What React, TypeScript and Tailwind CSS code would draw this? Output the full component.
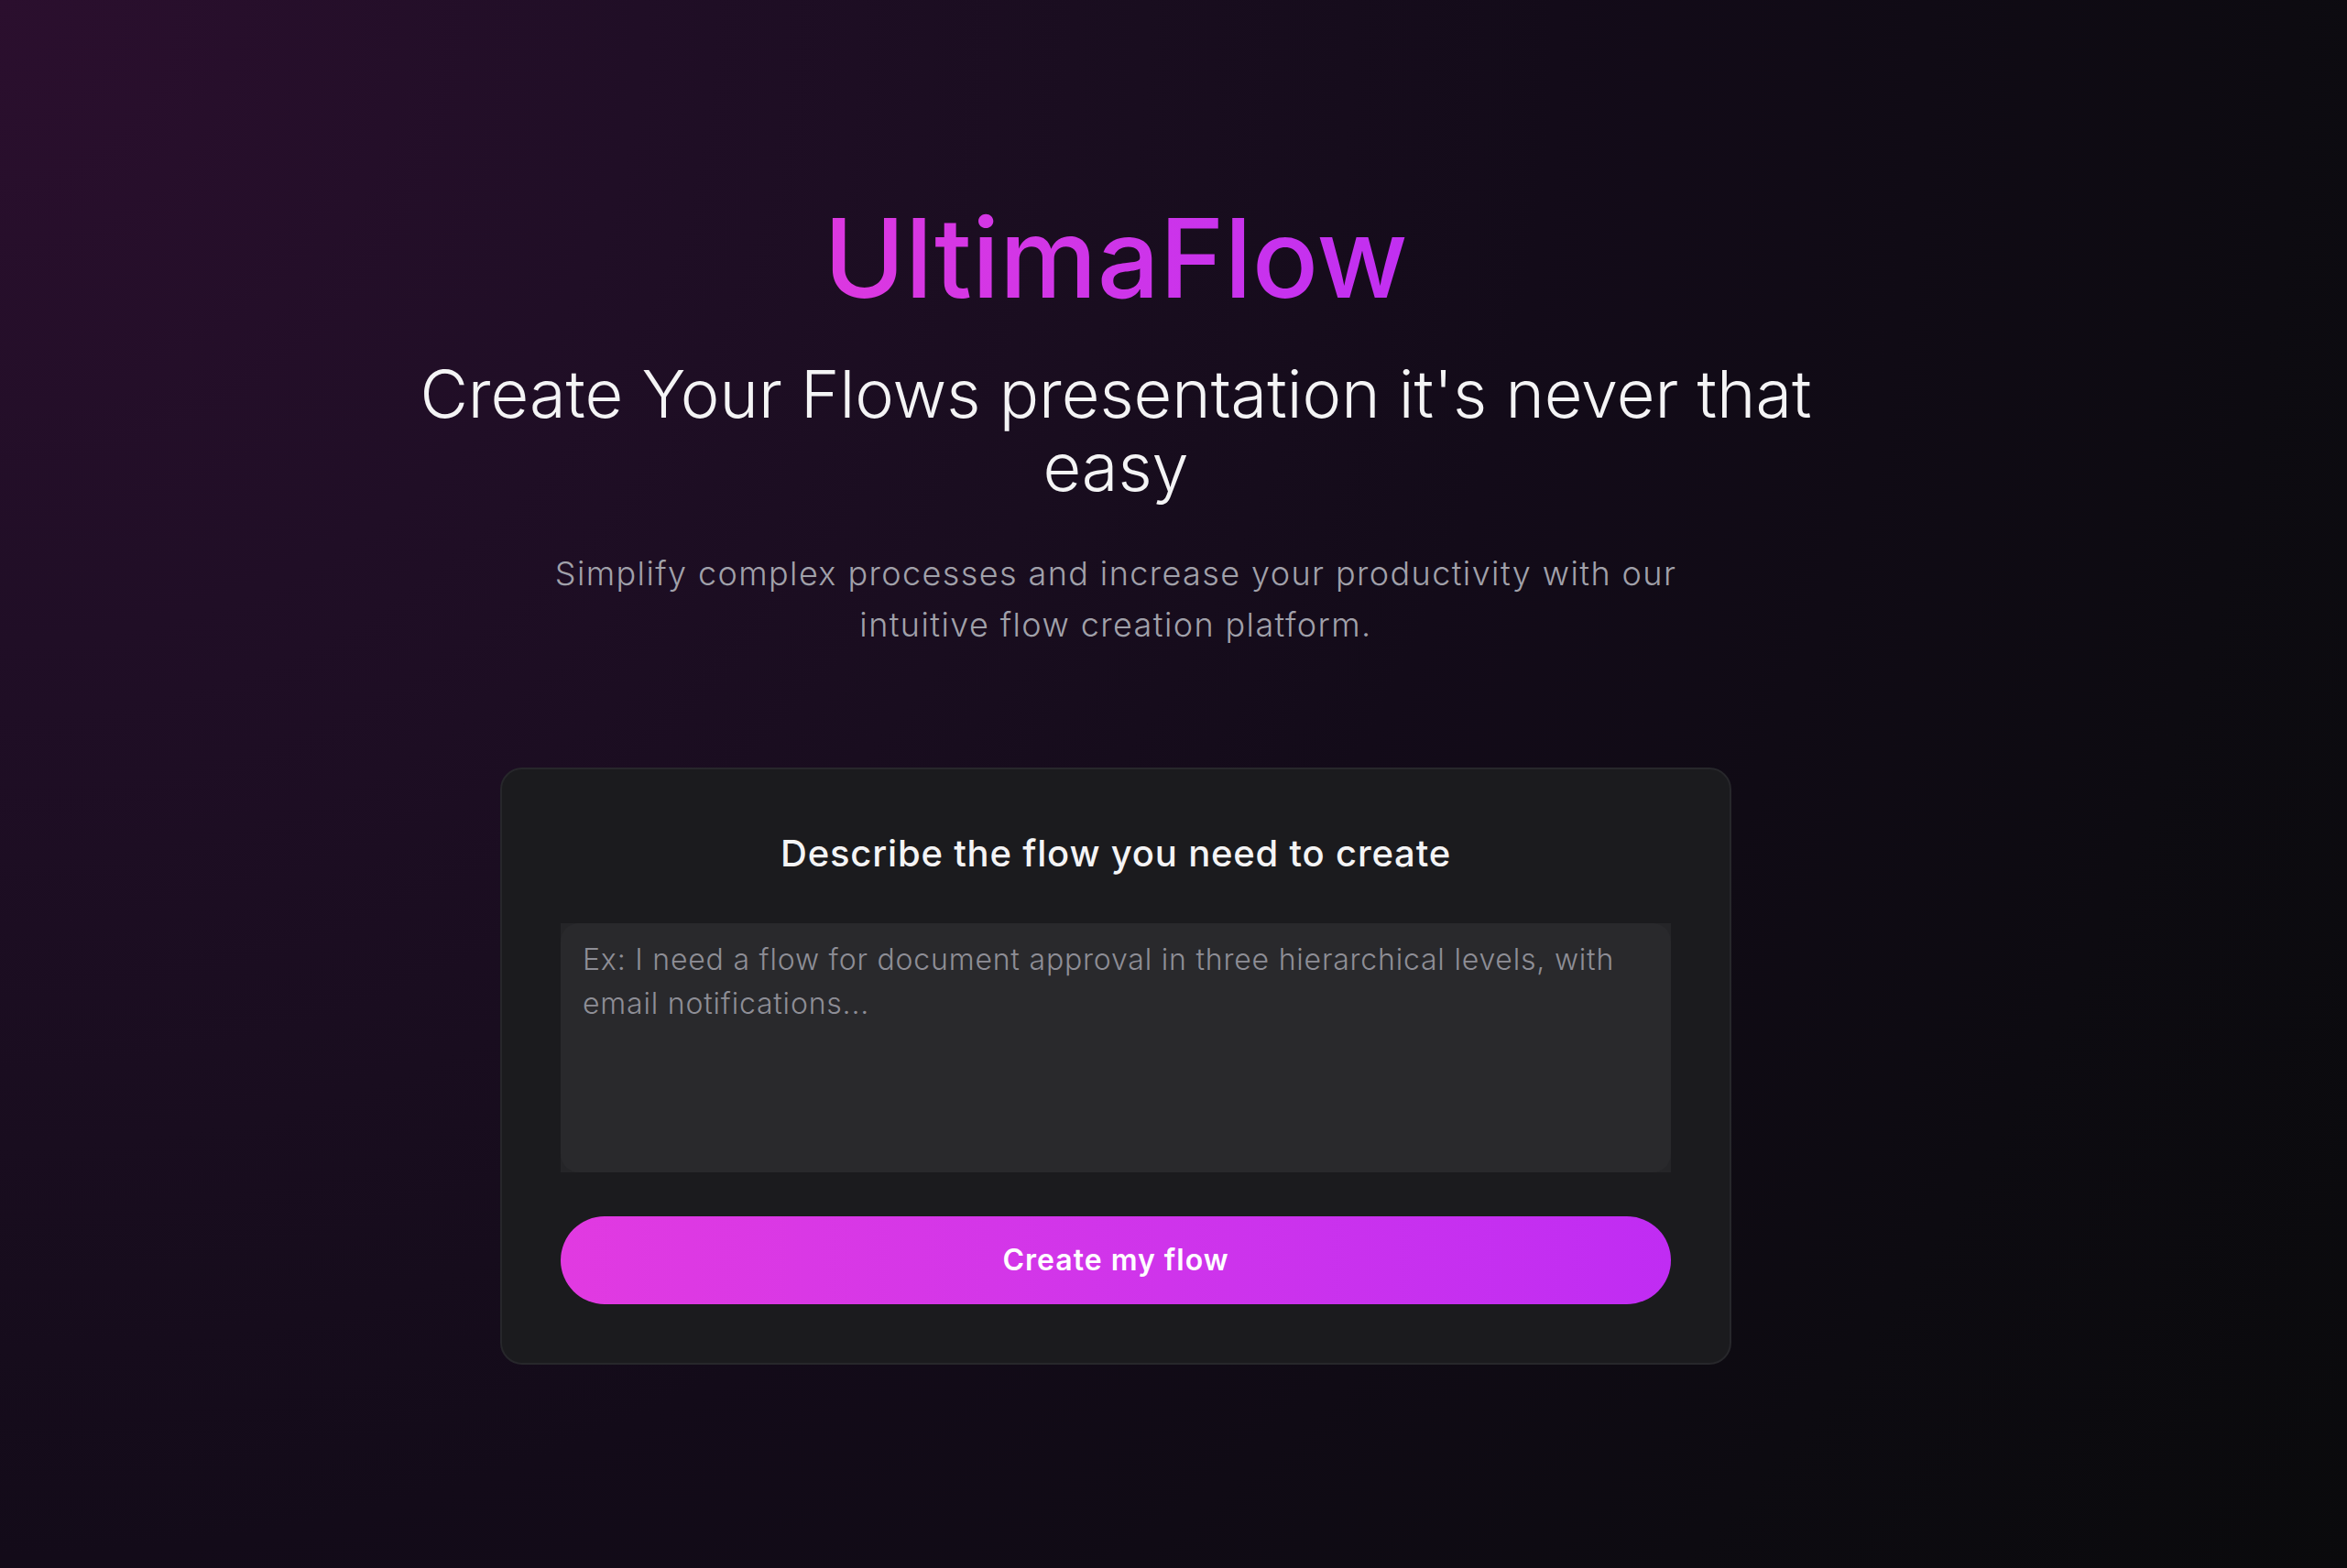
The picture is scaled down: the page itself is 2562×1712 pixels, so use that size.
import { useState } from "react";

export default function App() {
  const [prompt, setPrompt] = useState("");

  return (
    <main
      className="flex min-h-screen w-full items-center justify-center bg-[radial-gradient(circle_at_0_0,#2b0f2e_0px,#200e26_700px,#190d1f_1250px,#130b19_1700px,#0d0b11_2500px,#0a0a0c_3100px)] pr-[126px] font-['Inter','Liberation_Sans',sans-serif]"
    >
      <div className="flex flex-col items-center text-center">
        <h1 className="bg-linear-to-r from-[#dc38e0] to-[#c12ff1] bg-clip-text text-[120px] leading-[120px] font-medium text-transparent">
          UltimaFlow
        </h1>
        <h2 className="mt-12 max-w-[1536px] text-[72px] leading-[80px] font-light text-[#f4f4f5]">
          Create Your Flows presentation it's never that easy
        </h2>
        <p className="mt-12 max-w-[1250px] text-[36px] leading-[56px] font-light tracking-[1.4px] text-[#a1a1aa]">
          Simplify complex processes and increase your productivity with our intuitive flow creation platform.
        </p>

        <div className="mt-32 w-[1344px] rounded-[24px] border-2 border-[#27272b] bg-[#1b1b1e] p-16">
          <h3 className="text-[40px] leading-[56px] font-medium tracking-[0.8px] text-[#f4f4f5]">
            Describe the flow you need to create
          </h3>
          <div className="mt-12 bg-[#252528]">
            <textarea
              rows={5}
              value={prompt}
              onChange={(e) => setPrompt(e.target.value)}
              placeholder="Ex: I need a flow for document approval in three hierarchical levels, with email notifications..."
              className="block w-full resize-none rounded-[20px] bg-[#29292c] px-6 py-4 text-left text-[32px] leading-[48px] font-light tracking-[0.8px] text-[#e4e4e7] placeholder:text-[#8e8e96] focus:outline-none"
            />
          </div>
          <button
            type="button"
            className="mt-12 h-[96px] w-full rounded-full bg-linear-to-r from-[#e13ae1] to-[#c02cf3] text-[32px] font-semibold tracking-[1px] text-white"
          >
            Create my flow
          </button>
        </div>
      </div>
    </main>
  );
}
